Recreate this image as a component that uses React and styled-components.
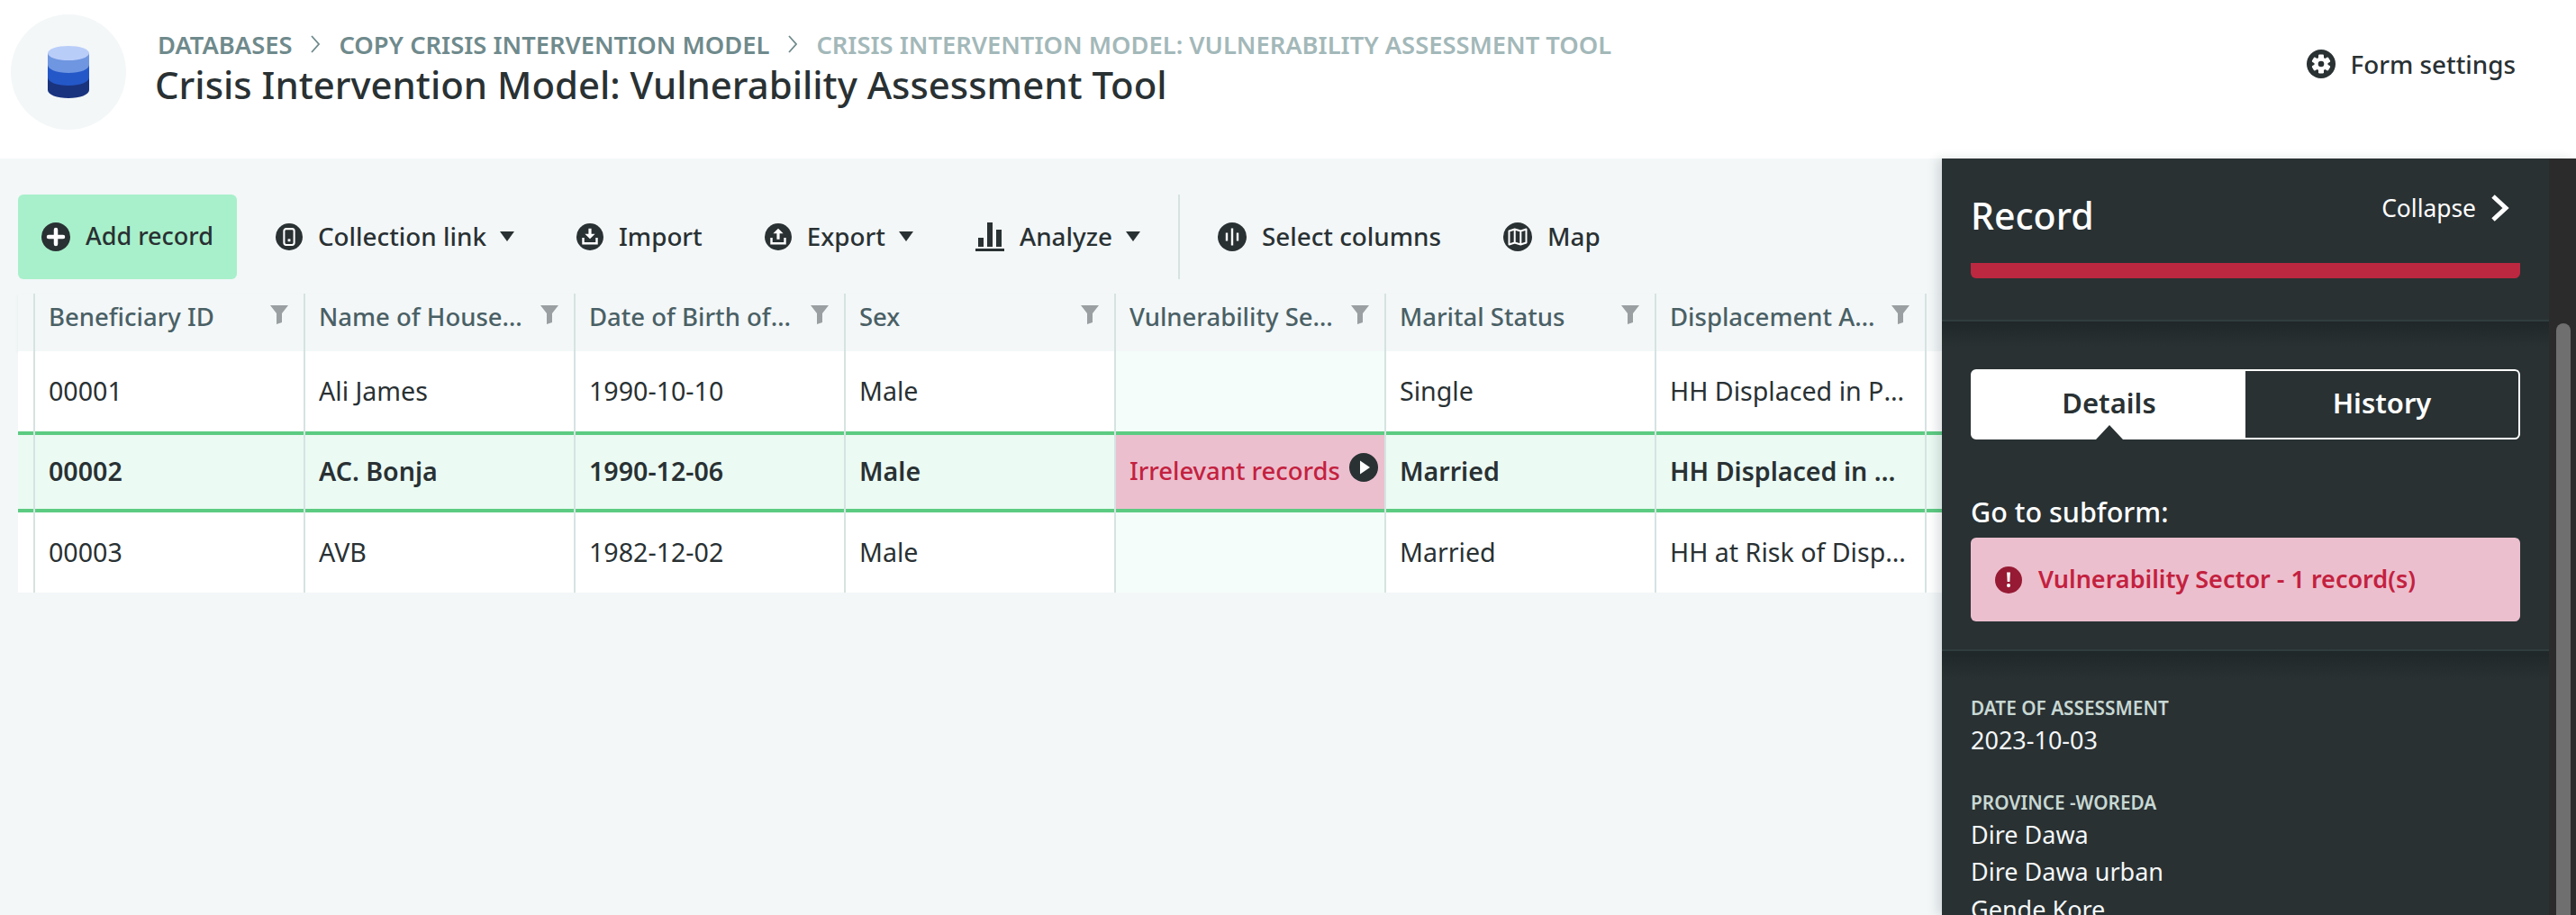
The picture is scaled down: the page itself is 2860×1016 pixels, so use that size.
import React from "react";
import styled, { createGlobalStyle } from "styled-components";

const Global = createGlobalStyle`
  html, body {
    margin: 0;
    height: 100%;
    overflow: hidden;
  }
  body {
    font-family: "Noto Sans", "Open Sans", sans-serif;
    color: #293133;
    background: #f3f7f8;
  }
  * {
    box-sizing: border-box;
  }
`;

const Page = styled.div`
  height: 1016px;
  display: flex;
  flex-direction: column;
  overflow: hidden;
`;

const TopBar = styled.header`
  height: 176px;
  flex: none;
  background: white;
  display: flex;
  align-items: flex-start;
  padding: 16px 67px 0 12px;
`;

const DbBadge = styled.div`
  width: 128px;
  height: 128px;
  flex: none;
  border-radius: 50%;
  background: #f3f7f8;
  display: flex;
  align-items: center;
  justify-content: center;
`;

const TitleBlock = styled.div`
  margin-left: 32px;
  flex: 1;
  padding-top: 14px;
`;

const Crumbs = styled.div`
  display: flex;
  align-items: center;
  gap: 21px;
  height: 38px;
  padding-left: 3px;
  font-size: 27.3px;
  font-weight: 600;
  text-transform: uppercase;
  color: #6f8a8c;
  span:last-child {
    color: #a3b8b9;
  }
`;

const Title = styled.h1`
  margin: 0;
  font-size: 41.9px;
  line-height: 52px;
  font-weight: 500;
  color: #293133;
`;

const SettingsLink = styled.a`
  display: flex;
  align-items: center;
  gap: 17px;
  margin-top: 36px;
  font-size: 27.8px;
  font-weight: 500;
`;

const Content = styled.div`
  flex: 1;
  min-height: 0;
  display: flex;
`;

const Main = styled.main`
  flex: 1;
  min-width: 0;
  padding: 40px 0 0 20px;
  overflow: hidden;
`;

const Toolbar = styled.div`
  display: flex;
  align-items: stretch;
  gap: 17px;
  height: 94px;
`;

const ToolButton = styled.button`
  display: flex;
  align-items: center;
  gap: 17px;
  padding: 0 26px;
  border: 0;
  border-radius: 6px;
  background: ${(p) => (p.$primary ? "#a8f0cb" : "transparent")};
  color: #293133;
  font-family: inherit;
  font-size: ${(p) => (p.$primary ? 27 : 27.8)}px;
  font-weight: 500;
  white-space: nowrap;
`;

const ToolLabel = styled.span`
  margin-top: -3px;
`;

const Caret = styled.i`
  width: 0;
  height: 0;
  margin: -2px 0 0 -2px;
  border-left: 8px solid transparent;
  border-right: 8px solid transparent;
  border-top: 11px solid #293133;
`;

const ToolDivider = styled.div`
  width: 2px;
  margin: 0 -1px;
  background: #d5e3e1;
`;

const Grid = styled.div`
  margin-top: 16px;
  width: 2417px;
`;

const Row = styled.div`
  display: grid;
  grid-template-columns: 17px repeat(8, 300px);
  height: ${(p) => p.$height}px;
`;

const HeaderRow = styled(Row)`
  box-shadow: 0 2px 3px rgba(60, 80, 85, 0.08);
  position: relative;
`;

const HeaderCell = styled.div`
  position: relative;
  display: flex;
  justify-content: space-between;
  padding: 7px 17px 0 15px;
  border-left: 2px solid #d5e3e1;
  font-size: 27.5px;
  font-weight: 500;
  color: #4a6065;
  &:first-child {
    border-left: 0;
  }
  svg {
    flex: none;
    margin-top: 6px;
  }
`;

const HeaderText = styled.span`
  width: 230px;
  line-height: 38px;
  white-space: nowrap;
  overflow: hidden;
  text-overflow: ellipsis;
`;

const Cell = styled.div`
  position: relative;
  display: flex;
  align-items: center;
  min-width: 0;
  padding: 0 21px 3px 15px;
  border-left: 2px solid #d5e3e1;
  font-size: ${(p) => (p.$error ? 27.4 : 28.6)}px;
  font-weight: ${(p) => (p.$error ? 500 : p.$selected ? 600 : 400)};
  color: ${(p) => (p.$error ? "#c3213f" : "#293133")};
  background: ${(p) =>
    p.$error ? "#ecbfce" : p.$selected ? "#ebfaf3" : p.$tinted ? "#f4fdf9" : "white"};
  box-shadow: ${(p) =>
    p.$selected ? "inset 0 4px 0 #5ccb82, inset 0 -4px 0 #5ccb82" : "none"};
  &:first-child {
    border-left: 0;
    padding: 0;
  }
`;

const CellText = styled.span`
  white-space: nowrap;
  overflow: hidden;
  text-overflow: ellipsis;
`;

const PlayBadge = styled.span`
  position: absolute;
  top: 24px;
  right: 7px;
  display: flex;
`;

const Panel = styled.aside`
  width: 704px;
  flex: none;
  display: flex;
  background: #2b2b2b;
  position: relative;
  overflow: hidden;
  box-shadow: -6px 0 10px rgba(40, 60, 65, 0.14);
`;

const PanelBody = styled.div`
  width: 674px;
  flex: none;
  background: #293133;
  color: white;
`;

const PanelHead = styled.div`
  height: 181px;
  padding: 0 32px;
  border-bottom: 2px solid #303d3e;
`;

const PanelTop = styled.div`
  display: flex;
  justify-content: space-between;
  height: 116px;
  padding: 36px 12px 0 0;
`;

const PanelTitle = styled.h2`
  margin: 0;
  font-size: 41px;
  line-height: 54px;
  font-weight: 500;
`;

const CollapseLink = styled.a`
  display: flex;
  align-items: center;
  gap: 16px;
  height: 38px;
  font-size: 26.4px;
  font-weight: 400;
`;

const StatusBar = styled.div`
  height: 17px;
  background: #bc2840;
  border-radius: 0 0 6px 6px;
`;

const Section = styled.section`
  height: 366px;
  padding: 53px 32px 0;
  border-bottom: 2px solid #303d3e;
  background: linear-gradient(#1f2729, #293133 28px);
`;

const Tabs = styled.div`
  display: flex;
  height: 78px;
  border: 2px solid white;
  border-radius: 6px;
`;

const Tab = styled.div`
  position: relative;
  flex: 1;
  display: flex;
  align-items: center;
  justify-content: center;
  padding-bottom: 5px;
  font-size: 31px;
  font-weight: 600;
  background: ${(p) => (p.$active ? "white" : "transparent")};
  color: ${(p) => (p.$active ? "#293133" : "white")};
  ${(p) =>
    p.$active &&
    `&::after {
      content: "";
      position: absolute;
      bottom: -2px;
      left: 50%;
      margin-left: -15px;
      border-left: 15px solid transparent;
      border-right: 15px solid transparent;
      border-bottom: 16px solid #293133;
    }`}
`;

const SubformLabel = styled.div`
  margin-top: 60px;
  font-size: 30.5px;
  line-height: 40px;
  font-weight: 500;
`;

const SubformLink = styled.a`
  display: flex;
  align-items: center;
  gap: 18px;
  height: 93px;
  margin-top: 9px;
  padding: 0 0 2px 27px;
  border-radius: 6px;
  background: #ecbfce;
  color: #c3213f;
  font-size: 27px;
  font-weight: 600;
  svg {
    margin-top: 2px;
  }
`;

const Fields = styled.div`
  padding: 46px 32px 0;
  background: linear-gradient(#1f2729, #293133 32px);
`;

const Field = styled.div`
  margin-bottom: 31px;
`;

const FieldLabel = styled.div`
  margin-bottom: -2px;
  font-size: 20.8px;
  line-height: 34px;
  font-weight: 600;
  text-transform: uppercase;
  color: #c8d8d3;
`;

const FieldValue = styled.div`
  font-size: 27px;
  line-height: 41.5px;
  font-weight: 400;
  color: #f4f7f7;
`;

const ScrollTrack = styled.div`
  flex: 1;
  padding: 183px 6px 0 8px;
`;

const ScrollThumb = styled.div`
  height: 100%;
  background: #6f6f6f;
  border-radius: 8px 8px 0 0;
`;

const DK = "#293133";

const Disc = ({ size = 32, fill = DK, children }) => (
  <svg width={size} height={size} viewBox="0 0 32 32">
    <circle cx="16" cy="16" r="16" fill={fill} />
    {children}
  </svg>
);

const PlusIcon = () => (
  <Disc>
    <path d="M16 8v16M8 16h16" stroke="white" strokeWidth="4.5" strokeLinecap="round" />
  </Disc>
);

const LinkIcon = () => (
  <Disc size={30}>
    <rect x="10" y="6.5" width="12" height="19" rx="2.5" fill="none" stroke="white" strokeWidth="2.2" />
    <rect x="14.5" y="18.5" width="3" height="3" fill="white" />
  </Disc>
);

const Tray = () => <path d="M8 17v6.800h16V17" fill="none" stroke="white" strokeWidth="2.600" />;

const ImportIcon = () => (
  <Disc size={30}>
    <path d="M14.300 6h3.400v6.500H22L16 18.500 10 12.500h4.300z" fill="white" />
    <Tray />
  </Disc>
);

const ExportIcon = () => (
  <Disc size={30}>
    <path d="M14.300 19h3.400v-7H22L16 6 10 12h4.300z" fill="white" />
    <Tray />
  </Disc>
);

const BarsIcon = () => (
  <svg width="32" height="32" viewBox="0 0 32 32" fill={DK}>
    <rect x="3" y="17" width="6" height="10" />
    <rect x="13" y="0" width="6" height="27" />
    <rect x="23" y="8" width="6" height="19" />
    <rect x="0" y="29" width="32" height="3" />
  </svg>
);

const ColumnsIcon = () => (
  <Disc>
    <path d="M10 11.500v9M16 6.500v19M22 11.500v9" stroke="white" strokeWidth="2.400" />
  </Disc>
);

const MapIcon = () => (
  <Disc>
    <path
      d="M6.500 9.500l6.200-2 6.600 2 6.200-2v15l-6.200 2-6.600-2-6.200 2zM12.700 7.500v15M19.300 9.500v15"
      fill="none"
      stroke="white"
      strokeWidth="2"
      strokeLinejoin="round"
    />
  </Disc>
);

const GearIcon = () => (
  <Disc>
    <circle cx="16" cy="16" r="7.500" fill="white" />
    {[0, 60, 120, 180, 240, 300].map((deg) => (
      <rect key={deg} x="13" y="5.500" width="6" height="6" rx="1.200" fill="white" transform={`rotate(${deg} 16 16)`} />
    ))}
    <circle cx="16" cy="16" r="3.300" fill={DK} />
  </Disc>
);

const PlayIcon = () => (
  <Disc>
    <path d="M12 8.500l11 7.500-11 7.500z" fill="white" />
  </Disc>
);

const AlertIcon = () => (
  <Disc size={30} fill="#961a33">
    <path d="M14 7h4l-.6 11h-2.800z" fill="white" />
    <circle cx="16" cy="22.500" r="2.200" fill="white" />
  </Disc>
);

const FunnelIcon = () => (
  <svg width="20" height="21" viewBox="0 0 20 21" fill="#9aa0a2">
    <path d="M0 0h20l-7 9v10l-6 2V9z" />
  </svg>
);

const CrumbChevron = () => (
  <svg width="10" height="20" viewBox="0 0 10 20" fill="none" stroke="#6f8a8c" strokeWidth="1.800">
    <path d="M1 1l8 9-8 9" />
  </svg>
);

const CollapseChevron = () => (
  <svg width="21" height="30" viewBox="0 0 21 30" fill="none" stroke="white" strokeWidth="5">
    <path d="M3 2l14 13L3 28" />
  </svg>
);

const DatabaseIcon = () => (
  <svg width="46" height="58" viewBox="0 0 46 58">
    <path d="M0 8v41c0 5 10 9 23 9s23-4 23-9V8z" fill="#1a337f" />
    <path d="M0 8v27c0 5 10 9 23 9s23-4 23-9V8z" fill="#2458c9" />
    <path d="M0 8v13c0 5 10 9 23 9s23-4 23-9V8z" fill="#6f96e0" />
    <ellipse cx="23" cy="8" rx="23" ry="8" fill="#b9cdf9" />
  </svg>
);

const columns = [
  "Beneficiary ID",
  "Name of Household Head",
  "Date of Birth of Household Head",
  "Sex",
  "Vulnerability Sector",
  "Marital Status",
  "Displacement Area of Household",
];

const records = [
  ["00001", "Ali James", "1990-10-10", "Male", "", "Single", "HH Displaced in Place of Origin"],
  ["00002", "AC. Bonja", "1990-12-06", "Male", "Irrelevant records", "Married", "HH Displaced in Place of Origin"],
  ["00003", "AVB", "1982-12-02", "Male", "", "Married", "HH at Risk of Displacement"],
];

const SECTOR_COL = 4;

export default function App() {
  return (
    <Page>
      <Global />
      <TopBar>
        <DbBadge>
          <DatabaseIcon />
        </DbBadge>
        <TitleBlock>
          <Crumbs>
            <span>Databases</span>
            <CrumbChevron />
            <span>Copy Crisis Intervention Model</span>
            <CrumbChevron />
            <span>Crisis Intervention Model: Vulnerability Assessment Tool</span>
          </Crumbs>
          <Title>Crisis Intervention Model: Vulnerability Assessment Tool</Title>
        </TitleBlock>
        <SettingsLink>
          <GearIcon />
          Form settings
        </SettingsLink>
      </TopBar>
      <Content>
        <Main>
          <Toolbar>
            <ToolButton $primary>
              <PlusIcon />
              <ToolLabel>Add record</ToolLabel>
            </ToolButton>
            <ToolButton>
              <LinkIcon />
              <ToolLabel>Collection link</ToolLabel>
              <Caret />
            </ToolButton>
            <ToolButton>
              <ImportIcon />
              <ToolLabel>Import</ToolLabel>
            </ToolButton>
            <ToolButton>
              <ExportIcon />
              <ToolLabel>Export</ToolLabel>
              <Caret />
            </ToolButton>
            <ToolButton>
              <BarsIcon />
              <ToolLabel>Analyze</ToolLabel>
              <Caret />
            </ToolButton>
            <ToolDivider />
            <ToolButton>
              <ColumnsIcon />
              <ToolLabel>Select columns</ToolLabel>
            </ToolButton>
            <ToolButton>
              <MapIcon />
              <ToolLabel>Map</ToolLabel>
            </ToolButton>
          </Toolbar>
          <Grid>
            <HeaderRow $height={64}>
              <HeaderCell />
              {columns.map((name) => (
                <HeaderCell key={name}>
                  <HeaderText>{name}</HeaderText>
                  <FunnelIcon />
                </HeaderCell>
              ))}
              <HeaderCell />
            </HeaderRow>
            {records.map((record, i) => {
              const selected = i === 1;
              return (
                <Row key={record[0]} $height={selected ? 90 : 89}>
                  <Cell $selected={selected} />
                  {record.map((value, c) => (
                    <Cell
                      key={c}
                      $selected={selected}
                      $tinted={c === SECTOR_COL}
                      $error={c === SECTOR_COL && selected}
                    >
                      <CellText>{value}</CellText>
                      {c === SECTOR_COL && selected && (
                        <PlayBadge>
                          <PlayIcon />
                        </PlayBadge>
                      )}
                    </Cell>
                  ))}
                  <Cell $selected={selected} />
                </Row>
              );
            })}
          </Grid>
        </Main>
        <Panel>
          <PanelBody>
            <PanelHead>
              <PanelTop>
                <PanelTitle>Record</PanelTitle>
                <CollapseLink>
                  Collapse
                  <CollapseChevron />
                </CollapseLink>
              </PanelTop>
              <StatusBar />
            </PanelHead>
            <Section>
              <Tabs>
                <Tab $active>Details</Tab>
                <Tab>History</Tab>
              </Tabs>
              <SubformLabel>Go to subform:</SubformLabel>
              <SubformLink>
                <AlertIcon />
                Vulnerability Sector - 1 record(s)
              </SubformLink>
            </Section>
            <Fields>
              <Field>
                <FieldLabel>Date of Assessment</FieldLabel>
                <FieldValue>2023-10-03</FieldValue>
              </Field>
              <Field>
                <FieldLabel>Province -Woreda</FieldLabel>
                <FieldValue>Dire Dawa</FieldValue>
                <FieldValue>Dire Dawa urban</FieldValue>
                <FieldValue>Gende Kore</FieldValue>
              </Field>
            </Fields>
          </PanelBody>
          <ScrollTrack>
            <ScrollThumb />
          </ScrollTrack>
        </Panel>
      </Content>
    </Page>
  );
}
